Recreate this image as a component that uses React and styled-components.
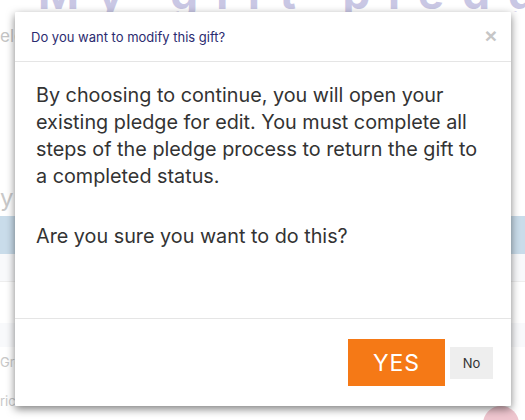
import React from 'react';
import styled, { createGlobalStyle } from 'styled-components';

const GlobalStyle = createGlobalStyle`
    * {
        box-sizing: border-box;
    }
    body {
        margin: 0;
        font-family: Inter, "Noto Sans", Arial, sans-serif;
        background: #ffffff;
    }
`;

const Page = styled.div`
    position: relative;
    width: 525px;
    height: 420px;
    overflow: hidden;
    display: grid;
    grid-template-columns: 1fr 47px;
    background: #ffffff;
`;

const Main = styled.div`
    display: flex;
    flex-direction: column;
`;

const BigTitle = styled.div`
    margin-top: -34px;
    padding-left: 38px;
    font-size: 44px;
    font-weight: 700;
    letter-spacing: 18px;
    color: #c9c7e4;
    white-space: nowrap;
    height: 46px;
    overflow: hidden;
`;

const SubText = styled.div`
    margin-top: 14px;
    font-size: 17px;
    color: #c4c4c4;
    height: 30px;
`;

const BgRow = styled.div`
    height: ${p => p.h}px;
    flex-shrink: 0;
    background: ${p => p.bg || 'transparent'};
    border-bottom: ${p => (p.line ? '1px solid #eeeeee' : 'none')};
    font-size: 13px;
    color: #c8c8c8;
    display: flex;
    align-items: ${p => p.align || 'center'};
`;

const BigLetter = styled.span`
    font-size: 24px;
    line-height: 1;
    padding-bottom: 6px;
`;

const Side = styled.div`
    display: flex;
    flex-direction: column;
    border-left: 1px solid #eeeeee;
`;

const SideCell = styled.div`
    height: ${p => p.h}px;
    flex-shrink: 0;
    border-bottom: 1px solid #e6e6e6;
    padding-left: 20px;
    display: flex;
    align-items: center;
    font-size: ${p => p.fs || 13}px;
    font-weight: 700;
    color: #d0d0d0;
`;

const Dot = styled.div`
    position: absolute;
    right: 6px;
    bottom: -22px;
    width: 36px;
    height: 36px;
    border-radius: 50%;
    background: #efc6cf;
`;

const Backdrop = styled.div`
    position: absolute;
    inset: 0;
    display: flex;
    justify-content: center;
    align-items: center;
    padding: 0 14px 2px 15px;
`;

const Modal = styled.div`
    width: 496px;
    height: 394px;
    background: #ffffff;
    display: flex;
    flex-direction: column;
    box-shadow: 0 3px 9px rgba(0, 0, 0, 0.5);
    border-radius: 1px;
`;

const Header = styled.div`
    height: 50px;
    padding: 0 16px;
    display: flex;
    align-items: center;
    justify-content: space-between;
    border-bottom: 1px solid #e5e5e5;
`;

const Title = styled.h4`
    margin: 0;
    font-size: 13px;
    font-weight: 400;
    color: #2b2b70;
`;

const Close = styled.button`
    border: none;
    background: none;
    padding: 0;
    font-family: Arial, sans-serif;
    font-size: 21px;
    font-weight: 700;
    line-height: 1;
    color: #c6c6c6;
    cursor: pointer;
    margin-right: -2px;
    margin-top: -2px;
`;

const Body = styled.div`
    flex: 1;
    padding: 20px 21px;
    font-size: 19.8px;
    line-height: 27px;
    color: #333333;
`;

const Para = styled.p`
    margin: 0 0 33px;
`;

const Footer = styled.div`
    height: 88px;
    border-top: 1px solid #e5e5e5;
    display: flex;
    justify-content: flex-end;
    align-items: center;
    gap: 5px;
    padding: 0 18px;
`;

const Button = styled.button`
    border: none;
    font-family: Inter, "Noto Sans", Arial, sans-serif;
    cursor: pointer;
    width: ${p => (p.primary ? 97 : 43)}px;
    height: ${p => (p.primary ? 47 : 32)}px;
    background: ${p => (p.primary ? '#f57916' : '#eeeeee')};
    color: ${p => (p.primary ? '#ffffff' : '#333333')};
    font-size: ${p => (p.primary ? 23 : 13)}px;
    letter-spacing: ${p => (p.primary ? '1px' : '0')};
    padding: 0;
`;

export default function App() {
    return (
        <>
            <GlobalStyle />
            <Page>
                <Main>
                    <BigTitle>My gift pledge</BigTitle>
                    <SubText>elect</SubText>
                    <BgRow h={116} />
                    <BgRow h={44} align="flex-end"><BigLetter>y</BigLetter></BgRow>
                    <BgRow h={38} bg="#c9dcea" />
                    <BgRow h={28} bg="#f8f9fb" line />
                    <BgRow h={41} />
                    <BgRow h={24} bg="#f8f9fb" />
                    <BgRow h={30}>Gre</BgRow>
                    <BgRow h={47}>rica</BgRow>
                </Main>
                <Side>
                    <SideCell h={83} fs={24}>S</SideCell>
                    <SideCell h={55}>ne</SideCell>
                    <SideCell h={70} />
                    <SideCell h={50}>at</SideCell>
                    <SideCell h={71} />
                    <SideCell h={58} />
                </Side>
                <Dot />
                <Backdrop>
                    <Modal role="dialog">
                        <Header>
                            <Title>Do you want to modify this gift?</Title>
                            <Close aria-label="Close">×</Close>
                        </Header>
                        <Body>
                            <Para>
                                By choosing to continue, you will open your existing pledge for edit. You must complete all steps of the pledge process to return the gift to a completed status.
                            </Para>
                            <Para>Are you sure you want to do this?</Para>
                        </Body>
                        <Footer>
                            <Button primary>YES</Button>
                            <Button>No</Button>
                        </Footer>
                    </Modal>
                </Backdrop>
            </Page>
        </>
    );
}
